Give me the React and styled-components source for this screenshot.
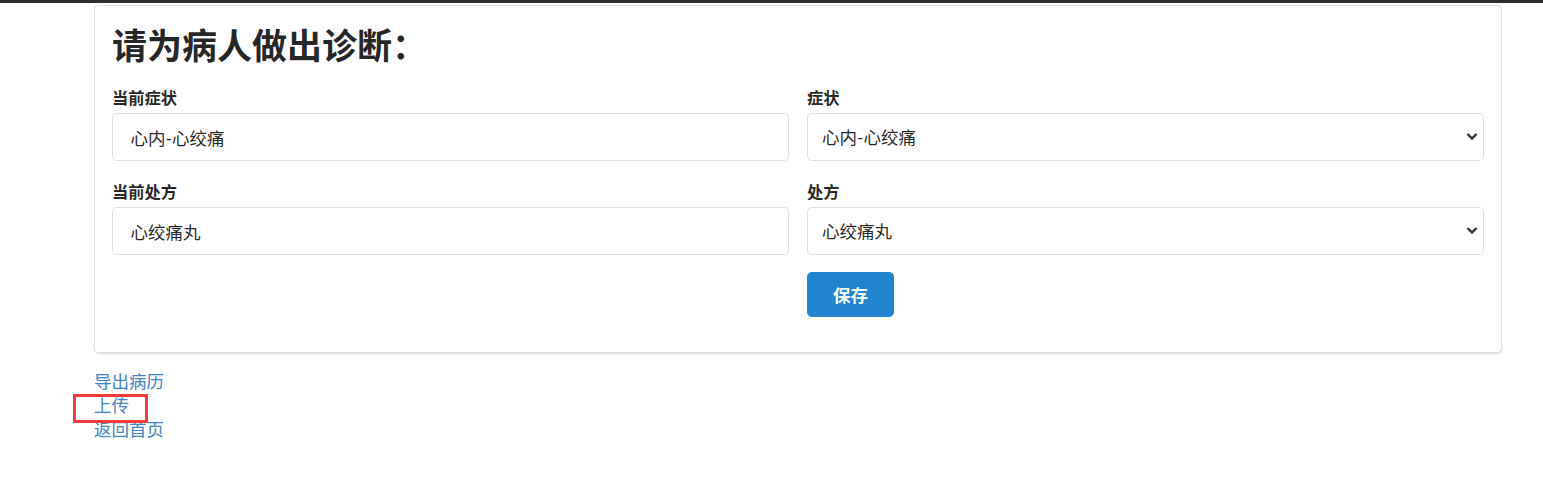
import React from 'react'
import styled, { createGlobalStyle } from 'styled-components'

const GlobalStyle = createGlobalStyle`
    html, body {
        margin: 0;
        padding: 0;
        background: #fff;
    }
    body {
        font-family: Lato, "Noto Sans CJK SC", "Helvetica Neue", Arial, sans-serif;
        font-size: 17.5px;
        color: rgba(0, 0, 0, .87);
    }
`

const TopBar = styled.div`
    height: 3px;
    background: #2e2e2e;
`

const Page = styled.div`
    padding: 2px 0 0 94px;
    position: relative;
`

const Segment = styled.div`
    width: 1408px;
    box-sizing: border-box;
    padding: 17px 17px 17px;
    background: #fff;
    border: 1px solid rgba(34, 36, 38, .15);
    border-radius: 5px;
    box-shadow: 0 1px 2px 0 rgba(34, 36, 38, .15);
`

const Title = styled.h1`
    margin: 0 0 19px;
    font-size: 35px;
    line-height: 45px;
    font-weight: 700;
    color: rgba(0, 0, 0, .87);
`

const FormGrid = styled.div`
    display: grid;
    grid-template-columns: 1fr 1fr;
    column-gap: 18px;
    row-gap: 20px;
`

const Field = styled.div`
    display: flex;
    flex-direction: column;
`

const Label = styled.label`
    font-size: 16.25px;
    font-weight: 700;
    line-height: 21px;
    margin-bottom: 5px;
    color: rgba(0, 0, 0, .87);
`

const Input = styled.input`
    box-sizing: border-box;
    height: 48px;
    padding: 0 17.5px;
    font-family: inherit;
    font-size: 17.5px;
    color: rgba(0, 0, 0, .87);
    border: 1px solid rgba(34, 36, 38, .15);
    border-radius: 5px;
    outline: none;
    background: #fff;
`

const SelectWrap = styled.div`
    position: relative;
`

const Select = styled.select`
    box-sizing: border-box;
    width: 100%;
    height: 48px;
    padding: 0 40px 0 14px;
    font-family: inherit;
    font-size: 17.5px;
    color: rgba(0, 0, 0, .87);
    border: 1px solid rgba(34, 36, 38, .15);
    border-radius: 5px;
    background: #fff;
    appearance: none;
    -webkit-appearance: none;
    outline: none;
`

const Chevron = styled.svg`
    position: absolute;
    right: 6px;
    top: 19px;
    pointer-events: none;
`

const ButtonCell = styled.div`
    grid-column: 2;
    margin-top: -3px;
    margin-bottom: 18px;
`

const Button = styled.button`
    height: 45px;
    padding: 0 26px;
    background: #2185d0;
    color: #fff;
    border: none;
    border-radius: 5px;
    font-family: inherit;
    font-size: 17.5px;
    font-weight: 700;
    cursor: pointer;
`

const Links = styled.div`
    display: flex;
    flex-direction: column;
    align-items: flex-start;
    margin-top: 17px;
`

const Link = styled.a`
    font-size: 17.5px;
    line-height: 24px;
    color: #4183c4;
    text-decoration: none;
`

const Highlight = styled.div`
    position: absolute;
    left: 73px;
    top: 391px;
    width: 75px;
    height: 29px;
    box-sizing: border-box;
    border: 3px solid #f43b3b;
    pointer-events: none;
`

const SelectField = ({ label, value }) => (
    <Field>
        <Label>{label}</Label>
        <SelectWrap>
            <Select defaultValue={value}>
                <option value={value}>{value}</option>
            </Select>
            <Chevron width="12" height="9" viewBox="0 0 12 9">
                <path d="M1.5 2 L6 6.5 L10.5 2" fill="none" stroke="#333" strokeWidth="2.4" />
            </Chevron>
        </SelectWrap>
    </Field>
)

export default function App() {
    return <>
        <GlobalStyle />
        <TopBar />
        <Page>
            <Segment>
                <Title>请为病人做出诊断：</Title>
                <FormGrid>
                    <Field>
                        <Label>当前症状</Label>
                        <Input defaultValue="心内-心绞痛" readOnly />
                    </Field>
                    <SelectField label="症状" value="心内-心绞痛" />
                    <Field>
                        <Label>当前处方</Label>
                        <Input defaultValue="心绞痛丸" readOnly />
                    </Field>
                    <SelectField label="处方" value="心绞痛丸" />
                    <ButtonCell>
                        <Button>保存</Button>
                    </ButtonCell>
                </FormGrid>
            </Segment>
            <Links>
                <Link href="#">导出病历</Link>
                <Link href="#">上传</Link>
                <Link href="#">返回首页</Link>
            </Links>
            <Highlight />
        </Page>
    </>
}
